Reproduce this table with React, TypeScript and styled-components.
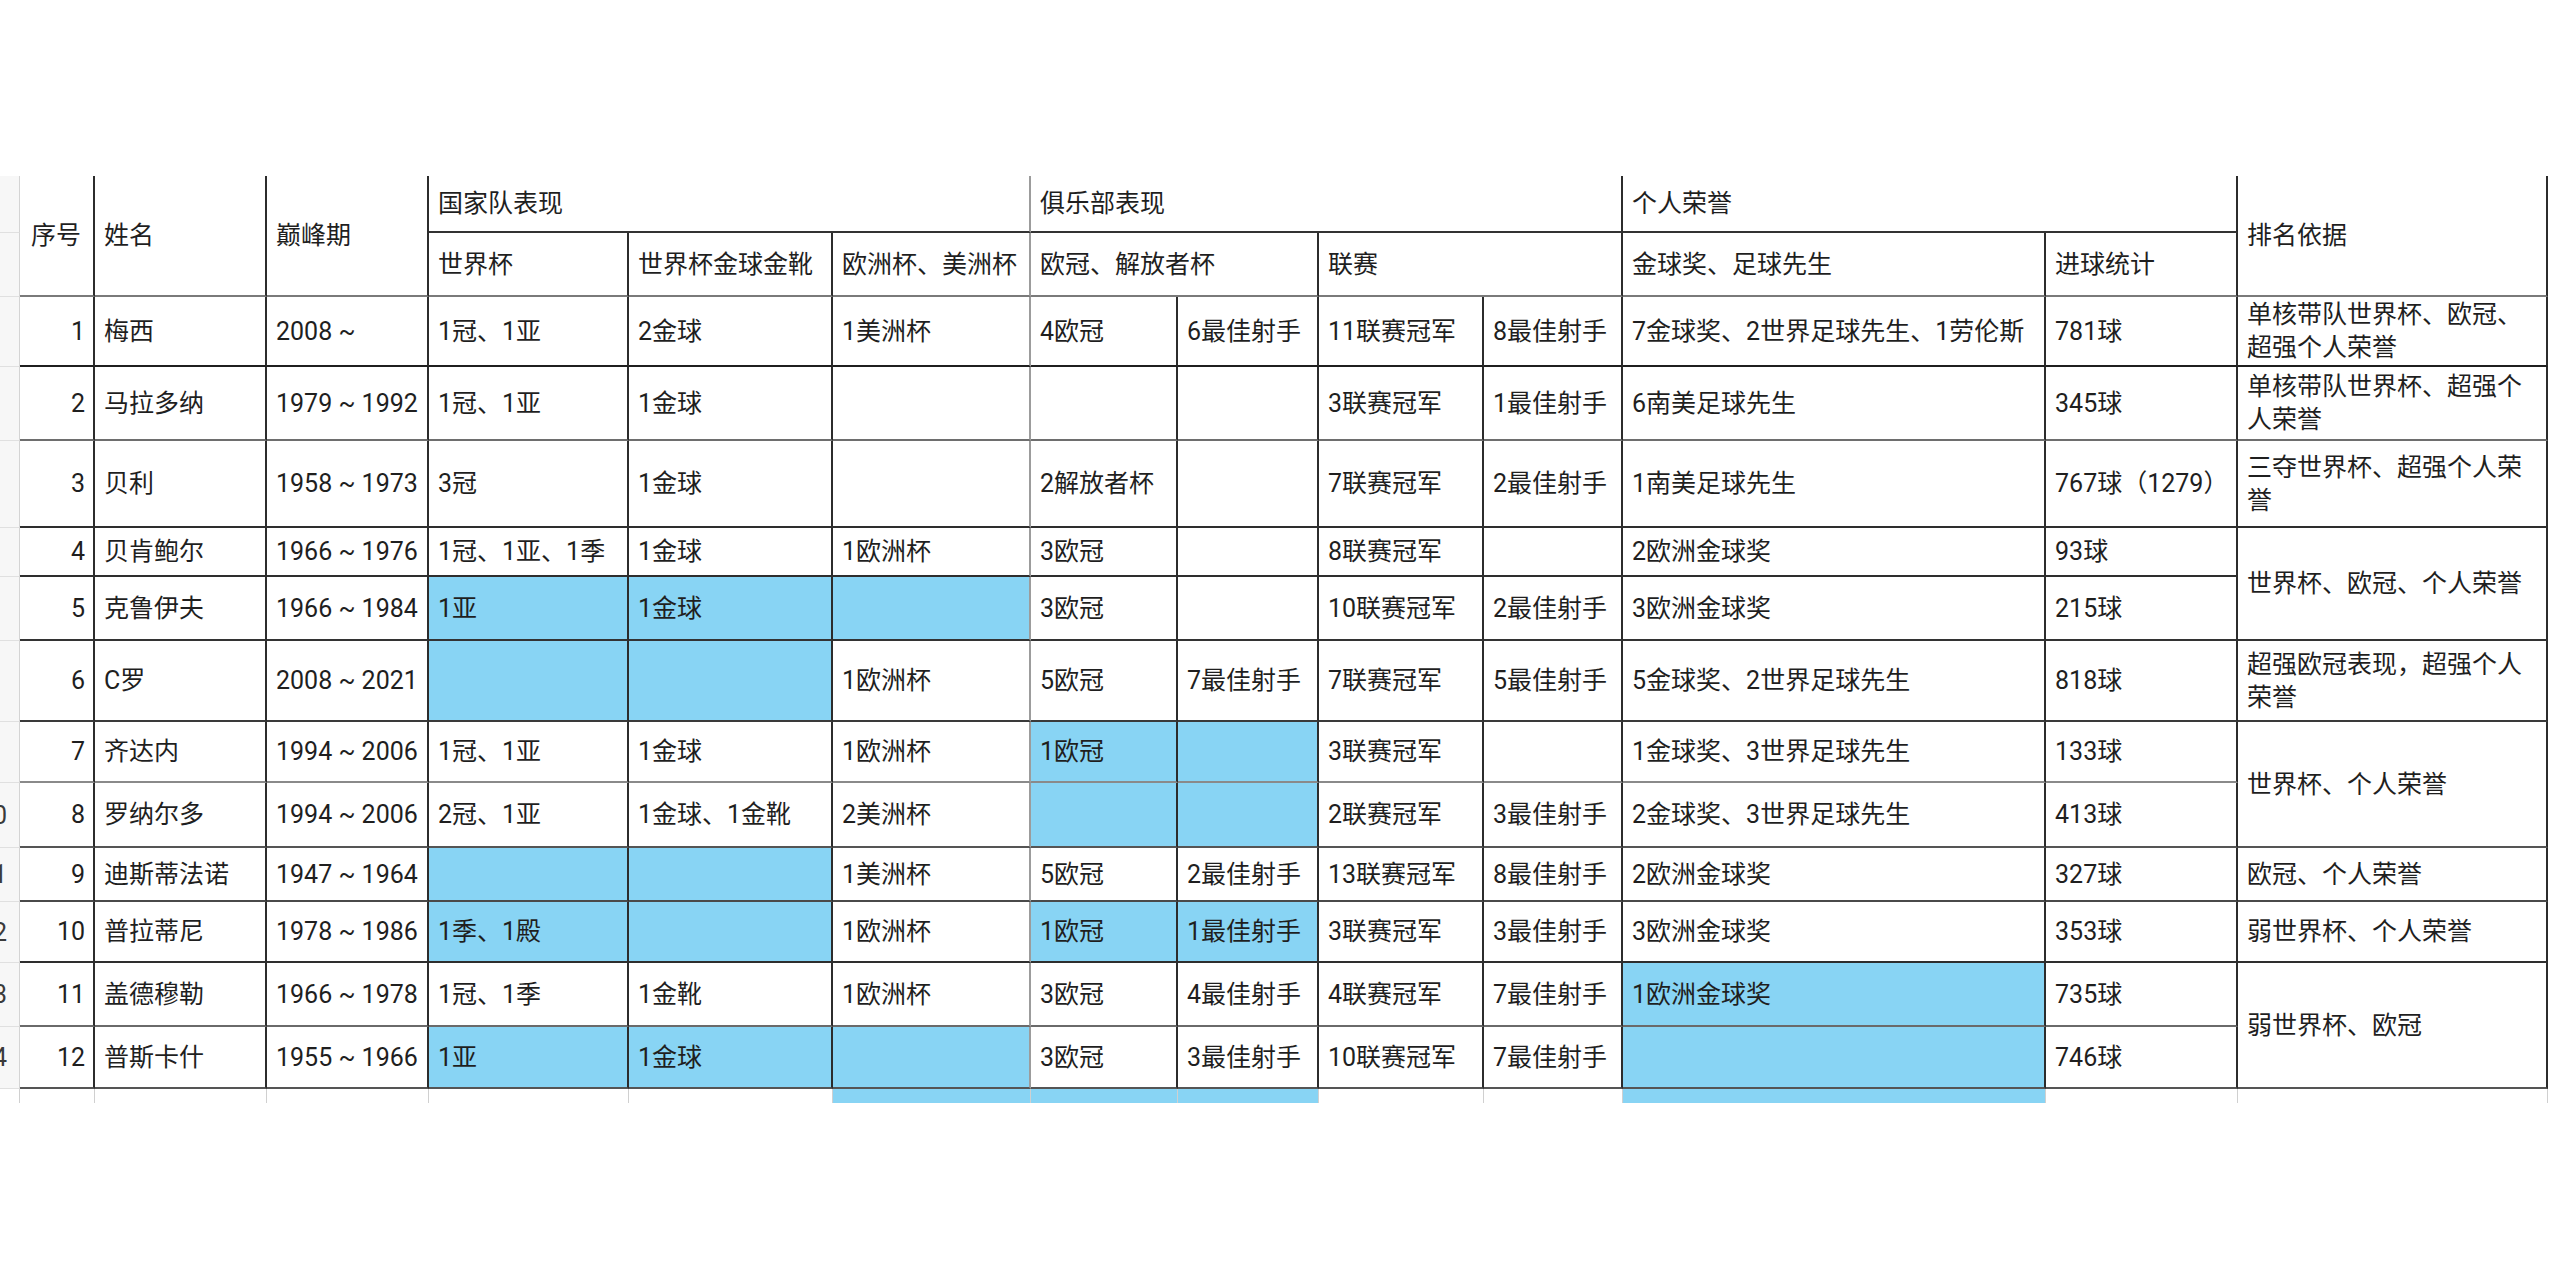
import styled, { createGlobalStyle } from "styled-components";

const GlobalStyle = createGlobalStyle`
  html, body {
    margin: 0;
    padding: 0;
    background: #ffffff;
  }
  body {
    font-family: Roboto, "Noto Sans CJK SC", sans-serif;
    color: #1f1f1f;
  }
`;

// Whole screenshot area
const Page = styled.div`
  width: 2560px;
  height: 1280px;
  padding-top: 176px;
  box-sizing: border-box;
  overflow: hidden;
`;

const Sheet = styled.table`
  border-collapse: separate;
  border-spacing: 0;
  table-layout: fixed;
  width: 2548px;
  font-size: 25px;
  line-height: 33px;
`;

const Row = styled.tr<{ $h: number }>`
  height: ${(p) => p.$h}px;
`;

const Cell = styled.td<{
  $line?: string;
  $edge?: string;
  $blue?: boolean;
  $right?: boolean;
  $wrap?: boolean;
  $padLeft?: number;
}>`
  box-sizing: border-box;
  padding: 0 ${(p) => (p.$wrap ? 18 : 8)}px 0 ${(p) => p.$padLeft ?? 9}px;
  border-right: 2px solid ${(p) => p.$edge ?? "#2c2c2c"};
  border-bottom: 2px solid ${(p) => p.$line ?? "#333333"};
  background: ${(p) => (p.$blue ? "#88d4f4" : "transparent")};
  text-align: ${(p) => (p.$right ? "right" : "left")};
  white-space: ${(p) => (p.$wrap ? "normal" : "nowrap")};
  overflow: hidden;
  vertical-align: middle;
  font-weight: 400;
`;

// Spreadsheet row-number strip, cut off at the left edge
const Gutter = styled.td<{ $line?: string }>`
  box-sizing: border-box;
  padding: 0;
  background: #f7f7f7;
  border-right: 1px solid #d4d4d4;
  border-bottom: 1px solid ${(p) => p.$line ?? "#e0e0e0"};
`;

const GutterLabel = styled.div`
  width: 20px;
  box-sizing: border-box;
  padding-right: 13px;
  display: flex;
  justify-content: flex-end;
  overflow: hidden;
  white-space: nowrap;
  color: #3a3a3a;
`;

// The next (cut) row below the table
const Stub = styled.td<{ $blue?: boolean }>`
  padding: 0;
  line-height: 0;
  border-right: 1px solid #d0d0d0;
  background: ${(p) => (p.$blue ? "#88d4f4" : "transparent")};
`;

const widths = [20, 75, 172, 162, 200, 204, 198, 147, 141, 165, 139, 423, 192, 310];

// right border colour for each of the 13 data columns
const edges = ["#2c2c2c", "#2c2c2c", "#2c2c2c", "#2c2c2c", "#2c2c2c", "#9c9c9c", "#2c2c2c", "#2c2c2c", "#2c2c2c", "#2c2c2c", "#2c2c2c", "#2c2c2c", "#2c2c2c"];

interface Entry {
  t?: string;
  blue?: boolean;
  span?: number;
  line?: string;
}

type Item = string | Entry | null;

const B = (t = ""): Entry => ({ t, blue: true });

interface DataRow {
  h: number;
  line: string;
  label?: string;
  cells: Item[];
}

const rows: DataRow[] = [
  {
    h: 70,
    line: "#1f1f1f",
    cells: ["1", "梅西", "2008 ~", "1冠、1亚", "2金球", "1美洲杯", "4欧冠", "6最佳射手", "11联赛冠军", "8最佳射手", "7金球奖、2世界足球先生、1劳伦斯", "781球", "单核带队世界杯、欧冠、超强个人荣誉"],
  },
  {
    h: 74,
    line: "#6e6e6e",
    cells: ["2", "马拉多纳", "1979 ~ 1992", "1冠、1亚", "1金球", "", "", "", "3联赛冠军", "1最佳射手", "6南美足球先生", "345球", "单核带队世界杯、超强个人荣誉"],
  },
  {
    h: 87,
    line: "#2e2e2e",
    cells: ["3", "贝利", "1958 ~ 1973", "3冠", "1金球", "", "2解放者杯", "", "7联赛冠军", "2最佳射手", "1南美足球先生", "767球（1279）", "三夺世界杯、超强个人荣誉"],
  },
  {
    h: 49,
    line: "#2e2e2e",
    cells: ["4", "贝肯鲍尔", "1966 ~ 1976", "1冠、1亚、1季", "1金球", "1欧洲杯", "3欧冠", "", "8联赛冠军", "", "2欧洲金球奖", "93球", { t: "世界杯、欧冠、个人荣誉", span: 2, line: "#333333" }],
  },
  {
    h: 64,
    line: "#333333",
    cells: ["5", "克鲁伊夫", "1966 ~ 1984", B("1亚"), B("1金球"), B(), "3欧冠", "", "10联赛冠军", "2最佳射手", "3欧洲金球奖", "215球", null],
  },
  {
    h: 81,
    line: "#3a3a3a",
    cells: ["6", "C罗", "2008 ~ 2021", B(), B(), "1欧洲杯", "5欧冠", "7最佳射手", "7联赛冠军", "5最佳射手", "5金球奖、2世界足球先生", "818球", "超强欧冠表现，超强个人荣誉"],
  },
  {
    h: 61,
    line: "#8a8a8a",
    cells: ["7", "齐达内", "1994 ~ 2006", "1冠、1亚", "1金球", "1欧洲杯", B("1欧冠"), B(), "3联赛冠军", "", "1金球奖、3世界足球先生", "133球", { t: "世界杯、个人荣誉", span: 2, line: "#555555" }],
  },
  {
    h: 65,
    line: "#555555",
    label: "10",
    cells: ["8", "罗纳尔多", "1994 ~ 2006", "2冠、1亚", "1金球、1金靴", "2美洲杯", B(), B(), "2联赛冠军", "3最佳射手", "2金球奖、3世界足球先生", "413球", null],
  },
  {
    h: 54,
    line: "#4a4a4a",
    label: "11",
    cells: ["9", "迪斯蒂法诺", "1947 ~ 1964", B(), B(), "1美洲杯", "5欧冠", "2最佳射手", "13联赛冠军", "8最佳射手", "2欧洲金球奖", "327球", "欧冠、个人荣誉"],
  },
  {
    h: 61,
    line: "#2e2e2e",
    label: "12",
    cells: ["10", "普拉蒂尼", "1978 ~ 1986", B("1季、1殿"), B(), "1欧洲杯", B("1欧冠"), B("1最佳射手"), "3联赛冠军", "3最佳射手", "3欧洲金球奖", "353球", "弱世界杯、个人荣誉"],
  },
  {
    h: 64,
    line: "#6a6a6a",
    label: "13",
    cells: ["11", "盖德穆勒", "1966 ~ 1978", "1冠、1季", "1金靴", "1欧洲杯", "3欧冠", "4最佳射手", "4联赛冠军", "7最佳射手", B("1欧洲金球奖"), "735球", { t: "弱世界杯、欧冠", span: 2, line: "#555555" }],
  },
  {
    h: 62,
    line: "#555555",
    label: "14",
    cells: ["12", "普斯卡什", "1955 ~ 1966", B("1亚"), B("1金球"), B(), "3欧冠", "3最佳射手", "10联赛冠军", "7最佳射手", B(), "746球", null],
  },
];

const stubBlue = [5, 6, 7, 10];

const TOP_LINE = "#333333";
const HEAD_LINE = "#7a7a7a";

export default function App() {
  return (
    <Page>
      <GlobalStyle />
      <Sheet>
        <colgroup>
          {widths.map((w, i) => (
            <col key={i} style={{ width: w }} />
          ))}
        </colgroup>
        <thead>
          <Row $h={57}>
            <Gutter />
            <Cell as="th" rowSpan={2} $line={HEAD_LINE} $padLeft={11}>序号</Cell>
            <Cell as="th" rowSpan={2} $line={HEAD_LINE}>姓名</Cell>
            <Cell as="th" rowSpan={2} $line={HEAD_LINE}>巅峰期</Cell>
            <Cell as="th" colSpan={3} $line={TOP_LINE} $edge={edges[5]}>国家队表现</Cell>
            <Cell as="th" colSpan={4} $line={TOP_LINE}>俱乐部表现</Cell>
            <Cell as="th" colSpan={2} $line={TOP_LINE}>个人荣誉</Cell>
            <Cell as="th" rowSpan={2} $line={HEAD_LINE}>排名依据</Cell>
          </Row>
          <Row $h={64}>
            <Gutter />
            <Cell as="th" $line={HEAD_LINE}>世界杯</Cell>
            <Cell as="th" $line={HEAD_LINE}>世界杯金球金靴</Cell>
            <Cell as="th" $line={HEAD_LINE} $edge={edges[5]}>欧洲杯、美洲杯</Cell>
            <Cell as="th" colSpan={2} $line={HEAD_LINE}>欧冠、解放者杯</Cell>
            <Cell as="th" colSpan={2} $line={HEAD_LINE}>联赛</Cell>
            <Cell as="th" $line={HEAD_LINE}>金球奖、足球先生</Cell>
            <Cell as="th" $line={HEAD_LINE}>进球统计</Cell>
          </Row>
        </thead>
        <tbody>
          {rows.map((r, ri) => (
            <Row key={ri} $h={r.h}>
              <Gutter>
                {r.label && <GutterLabel>{r.label}</GutterLabel>}
              </Gutter>
              {r.cells.map((c, ci) => {
                if (c === null) return null;
                const e: Entry = typeof c === "string" ? { t: c } : c;
                return (
                  <Cell
                    key={ci}
                    rowSpan={e.span}
                    $line={e.line ?? r.line}
                    $edge={edges[ci]}
                    $blue={e.blue}
                    $right={ci === 0}
                    $wrap={ci === 12}
                  >
                    {e.t}
                  </Cell>
                );
              })}
            </Row>
          ))}
          <Row $h={14}>
            <Stub />
            {edges.map((_, ci) => (
              <Stub key={ci} $blue={stubBlue.includes(ci)} />
            ))}
          </Row>
        </tbody>
      </Sheet>
    </Page>
  );
}
